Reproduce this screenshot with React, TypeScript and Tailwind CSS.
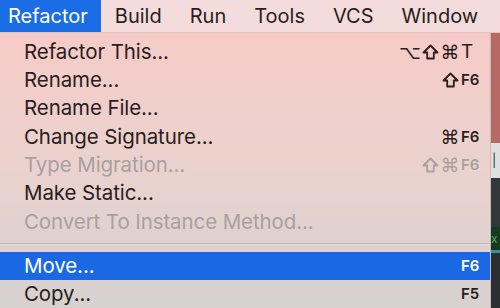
import React from 'react';

type Item = {
  label: string;
  mods?: string[];
  keyName?: string;
  small?: boolean;
  disabled?: boolean;
  active?: boolean;
};

const font = { fontFamily: 'Inter, "DejaVu Sans", sans-serif' };

const topItems: Item[] = [
  { label: 'Refactor This...', mods: ['⌥', '⇧', '⌘'], keyName: 'T' },
  { label: 'Rename...', mods: ['⇧'], keyName: 'F6', small: true },
  { label: 'Rename File...' },
  { label: 'Change Signature...', mods: ['⌘'], keyName: 'F6', small: true },
  { label: 'Type Migration...', mods: ['⇧', '⌘'], keyName: 'F6', small: true, disabled: true },
  { label: 'Make Static...' },
  { label: 'Convert To Instance Method...', disabled: true },
];

const bottomItems: Item[] = [
  { label: 'Move...', keyName: 'F6', small: true, active: true },
  { label: 'Copy...', keyName: 'F5', small: true },
];

// outlined shift arrow, the DejaVu glyph is too thin
const ShiftIcon = () => (
  <svg width="17" height="16" viewBox="0 0 17 16" fill="none" stroke="currentColor" strokeWidth="1.8" strokeLinejoin="round">
    <path d="M8.5 1.5 L15.5 8.5 H11.8 V14.5 H5.2 V8.5 H1.5 Z" />
  </svg>
);

const MenuRow: React.FC<{ item: Item }> = ({ item }) => {
  const color = item.active
    ? 'text-white bg-[#1a68e3]'
    : item.disabled
      ? 'text-[#a9a09e]'
      : 'text-[#2a1d1d]';
  return (
    <div className={`flex items-center h-[28.3px] pl-[24px] pr-[9px] ${color}`}>
      <span className="flex-1 text-[20.5px] tracking-[-0.1px] whitespace-nowrap">{item.label}</span>
      {item.keyName && (
        <span className="flex items-center">
          {item.mods?.map((m, i) => (
            <span
              key={i}
              className="w-[20px] h-[20px] flex items-center justify-center text-[19px]"
              style={{ fontFamily: '"DejaVu Sans", sans-serif' }}
            >
              {m === '⇧' ? <ShiftIcon /> : m}
            </span>
          ))}
          <span
            className={`inline-block w-[21px] pl-[1px] ${item.small ? 'text-[15px] font-semibold' : 'text-[19px]'}`}
          >
            {item.keyName}
          </span>
        </span>
      )}
    </div>
  );
};

const App: React.FC = () => {
  const bar = ['Build', 'Run', 'Tools', 'VCS', 'Window'];
  return (
    <div className="w-[500px] h-[308px] overflow-hidden flex flex-col bg-[#d8d2d0]" style={font}>
      {/* menu bar */}
      <div className="h-[33px] flex items-stretch bg-[#f3dcdb] border-b border-[#e0c4c2] text-[20px] text-[#2a1d1d]">
        <div className="flex items-center pl-[8px] pr-[13px] bg-[#1b6de6] text-white">Refactor</div>
        {bar.map((b) => (
          <div key={b} className="flex items-center px-[14px]">
            {b}
          </div>
        ))}
      </div>

      <div className="flex flex-1 min-h-0">
        {/* dropdown */}
        <div className="w-[491px] pt-[5px] bg-linear-to-b from-[#f6cbc7] via-[#ead2ce] to-[#d6d1cf] border-r border-[#c9b8b6]">
          {topItems.map((it) => (
            <MenuRow key={it.label} item={it} />
          ))}
          <div className="h-[16px] flex flex-col justify-center">
            <div className="h-[1px] bg-[#c2b9b7]" />
            <div className="h-[1px] bg-[#e2dcda]" />
          </div>
          {bottomItems.map((it) => (
            <MenuRow key={it.label} item={it} />
          ))}
        </div>

        {/* window behind the menu */}
        <div className="flex-1 flex flex-col overflow-hidden">
          <div className="h-[110px] bg-[#b76966]" />
          <div className="h-[35px] bg-[#dde0df] flex items-center pl-[1px] text-[13px] text-[#3a3a3a] overflow-hidden">|</div>
          <div className="h-[49px] bg-[#2f393a]" />
          <div className="h-[23px] bg-[#133c1d] flex items-center text-[12px] text-[#5da860] overflow-hidden">x</div>
          <div className="h-[3px] bg-[#3c8da0]" />
          <div className="flex-1 bg-[#2b2f31]" />
        </div>
      </div>
    </div>
  );
};

export default App;
